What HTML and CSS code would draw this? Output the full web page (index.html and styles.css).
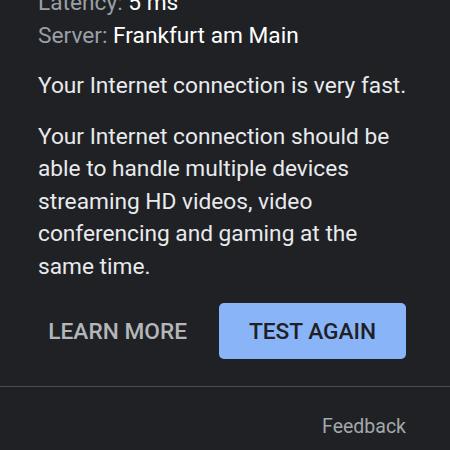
FILE: index.html
```html
<!DOCTYPE html>
<html lang="en">
<head>
    <meta charset="UTF-8">
    <meta name="viewport" content="width=device-width, initial-scale=1.0">
    <title>Speed Test Result</title>
    <link rel="stylesheet" href="styles.css">
</head>
<body>

    <div class="result">
        <div class="stats">
            <div class="stat"><span class="label">Latency:</span> 5 ms</div>
            <div class="stat"><span class="label">Server:</span> Frankfurt am Main</div>
        </div>

        <p class="summary">Your Internet connection is very fast.</p>
        <p class="summary">Your Internet connection should be able to handle multiple devices streaming HD videos, video conferencing and gaming at the same time.</p>

        <div class="actions">
            <button class="textBtn">LEARN MORE</button>
            <button class="primaryBtn">TEST AGAIN</button>
        </div>
    </div>

    <div class="footer">
        <a class="feedback" href="#">Feedback</a>
    </div>

</body>
</html>
```

FILE: styles.css
```css
body {
    margin: 0;
    background-color: #202124;
    color: #e8eaed;
    font-family: Roboto, 'Noto Sans', sans-serif;
    font-size: 22.7px;
    line-height: 32.5px;
    height: 450px;
    overflow: hidden;
}

/* list scrolled a little, so the first row sits under the top edge */
.result {
    margin-top: -13px;
    padding: 0 36px 0 38px;
}

.stat {
    color: #ffffff;
}

.stat .label {
    color: #9aa0a6;
}

.summary {
    margin: 18px 0 0 0;
}

.actions {
    display: flex;
    justify-content: flex-end;
    align-items: center;
    gap: 32px;
    margin-top: 20px;
    padding: 0 8px 27px 0;
}

.textBtn {
    background: none;
    border: none;
    color: #b3b6ba;
    font-family: inherit;
    font-size: 22.7px;
    font-weight: 500;
    padding: 0;
}

.primaryBtn {
    width: 187px;
    height: 56px;
    background-color: #8ab4f8;
    color: #202124;
    border: none;
    border-radius: 5px;
    font-family: inherit;
    font-size: 22.7px;
    font-weight: 500;
}

.footer {
    border-top: 1px solid #4a4c50;
    display: flex;
    justify-content: flex-end;
    padding: 24px 44px 0 0;
}

.feedback {
    color: #a4a8ac;
    font-size: 19.5px;
    text-decoration: none;
}
```
